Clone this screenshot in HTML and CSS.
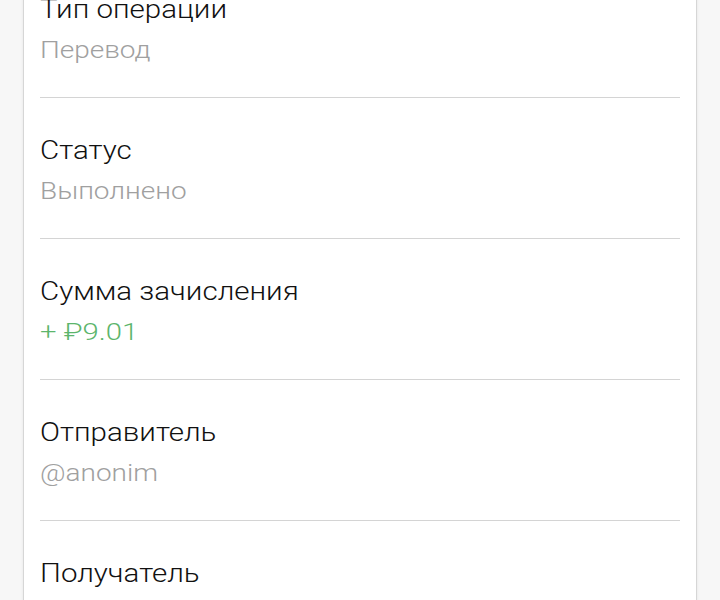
FILE: index.html
```html
<!DOCTYPE html>
<html lang="ru">
<head>
<meta charset="utf-8">
<link rel="stylesheet" href="styles.css">
</head>
<body>
<div class="card">
  <div class="row">
    <div class="label">Тип операции</div>
    <div class="value">Перевод</div>
  </div>
  <div class="row">
    <div class="label">Статус</div>
    <div class="value">Выполнено</div>
  </div>
  <div class="row">
    <div class="label">Сумма зачисления</div>
    <div class="value green">+ ₽9.01</div>
  </div>
  <div class="row">
    <div class="label">Отправитель</div>
    <div class="value">@anonim</div>
  </div>
  <div class="row">
    <div class="label">Получатель</div>
    <div class="value">@user</div>
  </div>
</div>
</body>
</html>
```
FILE: styles.css
```css
html, body {
  margin: 0;
  padding: 0;
  background: #f7f7f7;
  height: 600px;
  overflow: hidden;
}
.card {
  margin: -43px 23px 0;
  background: #fff;
  border-left: 1px solid #d6d6d6;
  border-right: 1px solid #d6d6d6;
  box-shadow: 0 0 3px rgba(0,0,0,0.08);
  padding: 0 16px;
  font-family: Roboto, "Noto Sans", sans-serif;
}
.row {
  padding: 37px 0 31px;
  border-bottom: 1px solid #d4d4d4;
}
.label,
.value {
  width: fit-content;
  line-height: 32px;
  transform: scaleX(1.165);
  transform-origin: left center;
  white-space: nowrap;
}
.label {
  font-size: 25px;
  color: #111;
  font-weight: 300;
  transform: scaleX(1.18);
}
.value {
  margin-top: 8px;
  font-size: 24px;
  color: #a0a0a0;
  font-weight: 300;
}
.value.green {
  color: #5cb56c;
  transform: scaleX(1.22);
}
```
